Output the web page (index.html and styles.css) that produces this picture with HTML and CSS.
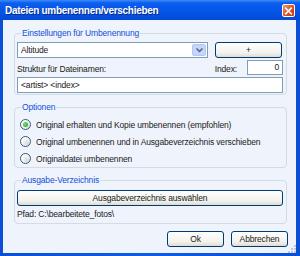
FILE: index.html
```html
<!DOCTYPE html>
<html lang="de">
<head>
    <meta charset="UTF-8">
    <title>Dateien umbenennen/verschieben</title>
    <link rel="stylesheet" href="styles.css">
</head>
<body>
    <div class="window">
        <div class="titlebar">
            <span class="title">Dateien umbenennen/verschieben</span>
            <span class="close-btn">
                <svg width="12" height="12" viewBox="0 0 12 12">
                    <path d="M3 3 L9 9 M9 3 L3 9" stroke="#fff" stroke-width="1.8" stroke-linecap="square"/>
                </svg>
            </span>
        </div>

        <div class="content">
            <fieldset class="group group-settings">
                <legend>Einstellungen für Umbenennung</legend>
                <div class="row">
                    <div class="combo">
                        <span class="combo-text">Altitude</span>
                        <span class="combo-arrow">
                            <svg width="7" height="5" viewBox="0 0 7 5">
                                <path d="M0.5 0.5 L3.5 3.5 L6.5 0.5" fill="none" stroke="#4d6185" stroke-width="1.5"/>
                            </svg>
                        </span>
                    </div>
                    <button class="btn btn-plus">+</button>
                </div>
                <div class="row row-label">
                    <span class="label">Struktur für Dateinamen:</span>
                    <span class="label index-label">Index:</span>
                    <div class="input input-index">0</div>
                </div>
                <div class="input input-pattern">&lt;artist&gt; &lt;index&gt;</div>
            </fieldset>

            <fieldset class="group group-options">
                <legend>Optionen</legend>
                <div class="radio checked"><span class="dot"></span>Original erhalten und Kopie umbenennen (empfohlen)</div>
                <div class="radio"><span class="dot"></span>Original umbenennen und in Ausgabeverzeichnis verschieben</div>
                <div class="radio"><span class="dot"></span>Originaldatei umbenennen</div>
            </fieldset>

            <fieldset class="group group-output">
                <legend>Ausgabe-Verzeichnis</legend>
                <button class="btn btn-wide">Ausgabeverzeichnis auswählen</button>
                <div class="path">Pfad: C:\bearbeitete_fotos\</div>
            </fieldset>

            <div class="actions">
                <button class="btn btn-action">Ok</button>
                <button class="btn btn-action">Abbrechen</button>
            </div>
            <span class="grip">
                <svg width="10" height="10" viewBox="0 0 10 10">
                    <rect x="8" y="2" width="2" height="2" fill="#c3c8d0"/>
                    <rect x="5" y="5" width="2" height="2" fill="#c3c8d0"/>
                    <rect x="8" y="5" width="2" height="2" fill="#c3c8d0"/>
                    <rect x="2" y="8" width="2" height="2" fill="#c3c8d0"/>
                    <rect x="5" y="8" width="2" height="2" fill="#c3c8d0"/>
                    <rect x="8" y="8" width="2" height="2" fill="#c3c8d0"/>
                </svg>
            </span>
        </div>
    </div>
</body>
</html>
```

FILE: styles.css
```css
* {
    margin: 0;
    padding: 0;
    box-sizing: border-box;
}

body {
    width: 300px;
    height: 256px;
    overflow: hidden;
    font-family: "Liberation Sans", Arial, sans-serif;
    font-size: 8.5px;
    letter-spacing: -0.15px;
    color: #1a1a1a;
}

.window {
    width: 300px;
    height: 256px;
    background: linear-gradient(to right, #0a4fd6, #0b5ce8 50%, #0a4fd6);
    padding: 0 4px 3px 3px;
    display: flex;
    flex-direction: column;
}

.titlebar {
    height: 20px;
    flex: none;
    display: flex;
    align-items: center;
    justify-content: space-between;
    margin: 0 -4px 0 -3px;
    padding: 0 5px 0 5px;
    background: linear-gradient(to bottom, #3d8cf7 0, #0a5ef0 3px, #0454e6 12px, #0449d4 20px);
}

.title {
    color: #fff;
    font-weight: bold;
    font-size: 10px;
    letter-spacing: -0.3px;
    text-shadow: 1px 1px 0 #0a2a8a;
}

.close-btn {
    width: 13px;
    height: 13px;
    border: 1px solid #fff;
    border-radius: 2px;
    background: linear-gradient(135deg, #f4986c, #e0461a 60%, #c93a10);
    display: flex;
}

.content {
    flex: 1;
    background: #eff3fb;
    padding: 7px 9px 0 11px;
    position: relative;
}

.group {
    border: 1px solid #d3dbe3;
    border-radius: 4px;
    padding: 0 3px 0 2px;
}

.group legend {
    color: #1450d8;
    padding: 0 1px;
    margin-left: 4px;
    line-height: 13px;
}

.group-settings {
    height: 68px;
    padding-top: 2px;
}

.row {
    display: flex;
    align-items: center;
}

.combo {
    width: 191px;
    height: 16px;
    border: 1px solid #7f9db9;
    background: #fff;
    display: flex;
    align-items: center;
    justify-content: space-between;
    padding: 0 1px 0 3px;
}

.combo-arrow {
    width: 14px;
    height: 12px;
    background: #c5d6fa;
    border: 1px solid #b3c7f3;
    border-radius: 2px;
    display: flex;
    align-items: center;
    justify-content: center;
}

.btn {
    font-family: inherit;
    font-size: 8.5px;
    letter-spacing: -0.15px;
    color: #1a1a1a;
    border: 1px solid #003c74;
    border-radius: 3px;
    background: linear-gradient(to bottom, #ffffff, #f3f2ec 70%, #dedbd2);
    height: 16px;
    line-height: 14px;
}

.btn-plus {
    width: 67px;
    margin-left: 7px;
}

.row-label {
    margin-top: 2px;
    height: 15px;
    align-items: flex-end;
}

.label {
    line-height: 12px;
}

.index-label {
    margin-left: auto;
    margin-right: 10px;
}

.input {
    border: 1px solid #7f9db9;
    background: #fff;
    height: 15px;
    line-height: 13px;
    padding: 0 3px;
}

.input-index {
    width: 36px;
    text-align: right;
}

.input-pattern {
    margin-top: 2px;
    height: 16px;
    line-height: 14px;
}

.group-options {
    margin-top: 6px;
    height: 67px;
    padding-top: 2px;
}

.radio {
    display: flex;
    align-items: center;
    height: 17px;
    padding-left: 3px;
    white-space: nowrap;
}

.dot {
    width: 11px;
    height: 11px;
    border: 1px solid #34587e;
    border-radius: 50%;
    background: radial-gradient(circle at 70% 70%, #d8dcd0, #ffffff 70%);
    margin-right: 5px;
    display: flex;
    align-items: center;
    justify-content: center;
}

.radio.checked .dot::after {
    content: "";
    width: 5px;
    height: 5px;
    border-radius: 50%;
    background: radial-gradient(circle at 35% 35%, #6ee06e, #21a121);
}

.group-output {
    margin-top: 6px;
    height: 50px;
    padding-top: 3px;
}

.btn-wide {
    width: 100%;
    display: block;
}

.path {
    margin-top: 2px;
    line-height: 13px;
}

.actions {
    display: flex;
    justify-content: flex-end;
    gap: 7px;
    margin-top: 7px;
    margin-right: -1px;
}

.btn-action {
    width: 57px;
}

.grip {
    position: absolute;
    right: 0;
    bottom: 0;
    display: flex;
}
```
